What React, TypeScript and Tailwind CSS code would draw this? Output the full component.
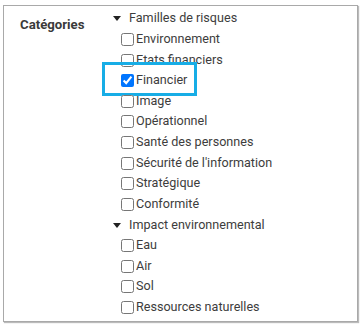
import React from 'react'

type Group = { label: string; items: string[] }

const groups: Group[] = [
  {
    label: 'Familles de risques',
    items: [
      'Environnement',
      'Etats financiers',
      'Financier',
      'Image',
      'Opérationnel',
      'Santé des personnes',
      "Sécurité de l'information",
      'Stratégique',
      'Conformité',
    ],
  },
  {
    label: 'Impact environnemental',
    items: ['Eau', 'Air', 'Sol', 'Ressources naturelles'],
  },
]

function Caret() {
  return (
    <svg width="8" height="5" viewBox="0 0 8 5" className="ml-[2px] mr-[8px]">
      <path d="M0 0 L8 0 L4 5 Z" fill="#222222" />
    </svg>
  )
}

export default function App() {
  return (
    <div className="w-[363px] h-[326px] bg-white pt-[5px] pl-[3px]" style={{ fontFamily: 'Roboto, sans-serif' }}>
      <div className="w-[355px] h-[317px] border border-[#a9a9a9] shadow-[1px_1px_1px_#bbbbbb] flex text-[12.6px] text-[#3d3d3d]">
        <div className="w-[107px] pl-[16px] pt-[9px] font-bold text-[13.2px] text-[#3a3a3a]">Catégories</div>
        <div className="flex flex-col pt-[2.5px]">
          {groups.map((g) => (
            <div key={g.label} className="flex flex-col">
              <div className="flex items-center h-[20.64px]">
                <Caret />
                <span>{g.label}</span>
              </div>
              {g.items.map((item) => {
                const checked = item === 'Financier'
                return (
                  <div key={item} className="relative flex items-center h-[20.64px] pl-[10px]">
                    {checked && (
                      <div className="absolute left-[-9px] top-[-8px] w-[95px] h-[34px] border-[3px] border-[#17ade6]" />
                    )}
                    <input type="checkbox" defaultChecked={checked} className="m-0 w-[13px] h-[13px]" />
                    <span className="ml-[2px]">{item}</span>
                  </div>
                )
              })}
            </div>
          ))}
        </div>
      </div>
    </div>
  )
}
